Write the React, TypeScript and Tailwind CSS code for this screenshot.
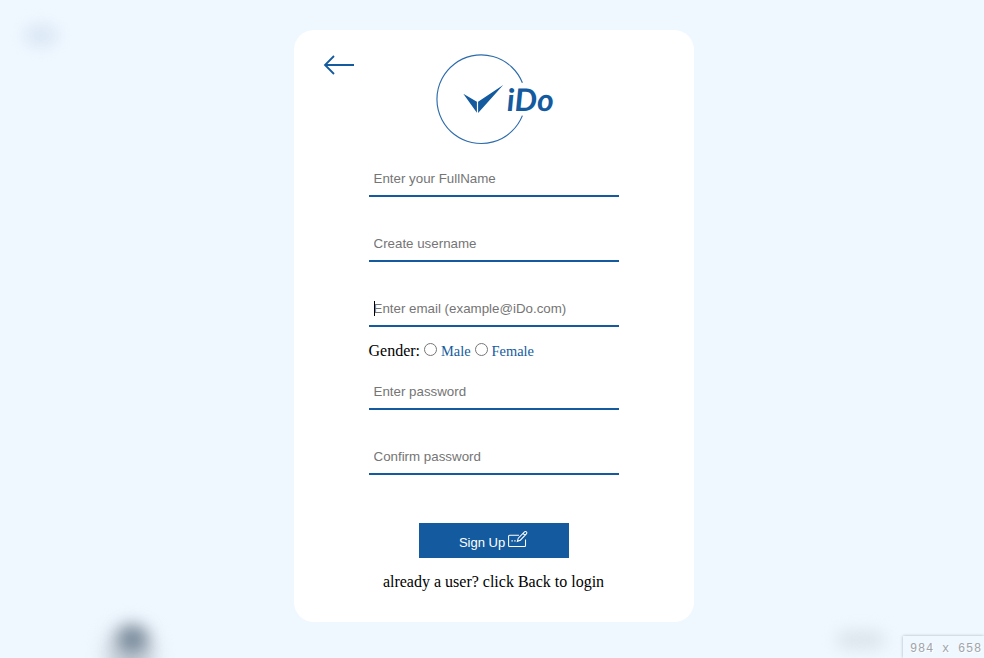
import React from "react";

const serif = "font-['Liberation_Serif',serif]";
const sans = "font-['Liberation_Sans',sans-serif]";

function Field({ placeholder, type = "text", caret = false }: { placeholder: string; type?: string; caret?: boolean }) {
  return (
    <div className="relative h-[35px] w-[250px]">
      <input
        type={type}
        placeholder={placeholder}
        className={`${sans} block h-[35px] w-full border-b-2 border-[#145a9e] bg-white px-[5px] text-[13.333px] placeholder:text-[#757575] outline-none`}
      />
      {caret && <span className="absolute left-[5px] top-[9px] h-[15px] w-px bg-black" />}
    </div>
  );
}

function Gender({ label }: { label: string }) {
  return (
    <label className="flex items-center">
      <span className="mr-1 mb-[3px] block h-[13px] w-[13px] rounded-full border border-[#767676] bg-white" />
      <span className="pt-px text-[14.4px] text-[#145a9e]">{label}</span>
    </label>
  );
}

function Logo() {
  return (
    <svg width="120" height="92" viewBox="0 0 120 92" className="block overflow-visible">
      <path d="M87.4 28.8A44.3 44.3 0 1 0 87.4 61.6" fill="none" stroke="#2c6bab" strokeWidth="1.15" />
      <path d="M28.3 39.7L41.9 47.7V58.7Z M68.2 31.1L43.1 47.7V58.9Z" fill="#145a9e" />
      <text transform="translate(72.1 56.5) skewX(1.5) scale(1.03 1)" fontFamily="Lato" fontSize="31" fontWeight="700" fontStyle="italic" fill="#145a9e">iDo</text>
    </svg>
  );
}

export default function App() {
  return (
    <div className={`${serif} relative flex h-[658px] w-[984px] overflow-hidden bg-[#f0f8ff] pl-[293.5px] pt-[30px] text-black`}>
      <div className="absolute left-[24px] top-[25px] h-[21px] w-[34px] rounded-full bg-[#d9e6f4] blur-[8px]" />
      <div className="absolute left-[106px] top-[626px] h-[60px] w-[48px] rounded-full bg-[#c5ced8] blur-[10px]" />
      <div className="absolute left-[118px] top-[626px] h-[27px] w-[29px] rounded-full bg-[#7a8b9b] blur-[8px]" />
      <div className="absolute left-[836px] top-[631px] h-[18px] w-[49px] rounded-full bg-[#dbe3eb] blur-[8px]" />

      <main className="flex h-[592px] w-[400px] flex-col items-center rounded-[20px] bg-white">
        <header className="flex h-[132px] w-full items-start pl-[29.5px] pt-[24px]">
          <button aria-label="Back" className="mt-px">
            <svg width="32" height="20" viewBox="0 0 32 20" fill="none" stroke="#145a9e" strokeWidth="1.8" className="block">
              <path d="M31 10H2M11 1L2 10l9 9" />
            </svg>
          </button>
          <div className="ml-[80px]"><Logo /></div>
        </header>
        <form className="flex flex-col items-center">
          <div className="flex flex-col gap-[30px]">
            <Field placeholder="Enter your FullName" />
            <Field placeholder="Create username" />
            <Field placeholder="Enter email (example@iDo.com)" caret />
          </div>
          <div className="flex h-[48px] w-[250px] items-center gap-1 text-[16px]">
            <span>Gender:</span>
            <Gender label="Male" />
            <Gender label="Female" />
          </div>
          <div className="flex flex-col gap-[30px]">
            <Field placeholder="Enter password" type="password" />
            <Field placeholder="Confirm password" type="password" />
          </div>
          <button type="button" className={`${sans} mt-[48px] flex h-[35px] w-[150px] items-center justify-center gap-[3px] bg-[#145a9e] text-[13px] text-white`}>
            <span className="pt-[4px]">Sign Up</span>
            <svg width="20" height="16" viewBox="0 0 21 17" fill="none" stroke="white" strokeWidth="1.1" className="mb-[4px]">
              <path d="M11.5 4.5H1.5a1 1 0 0 0-1 1v10a1 1 0 0 0 1 1h16a1 1 0 0 0 1-1V9" />
              <path d="M9.8 11l1-3.4L17.4 1q1-.9 2 0t0 2L13 9.8ZM15.8 2.5l2.2 2.2" />
              <path d="M3.5 10.5h1.5M6.5 10.5h1.5" />
            </svg>
          </button>
        </form>
        <p className="mt-[12px] text-[16px] leading-6">already a user? click Back to login</p>
      </main>

      <div className="absolute left-[903px] top-[636px] h-[22px] w-[81px] overflow-hidden whitespace-nowrap bg-[#f0f8ff] pl-[7px] pt-[5px] font-['Liberation_Mono',monospace] text-[12px] leading-[16px] tracking-[0.8px] text-[#a0a4a8] [text-shadow:1px_1px_0_#ffffff] shadow-[0_0_3px_#a9b3bd]">
        984 x 658
      </div>
    </div>
  );
}
